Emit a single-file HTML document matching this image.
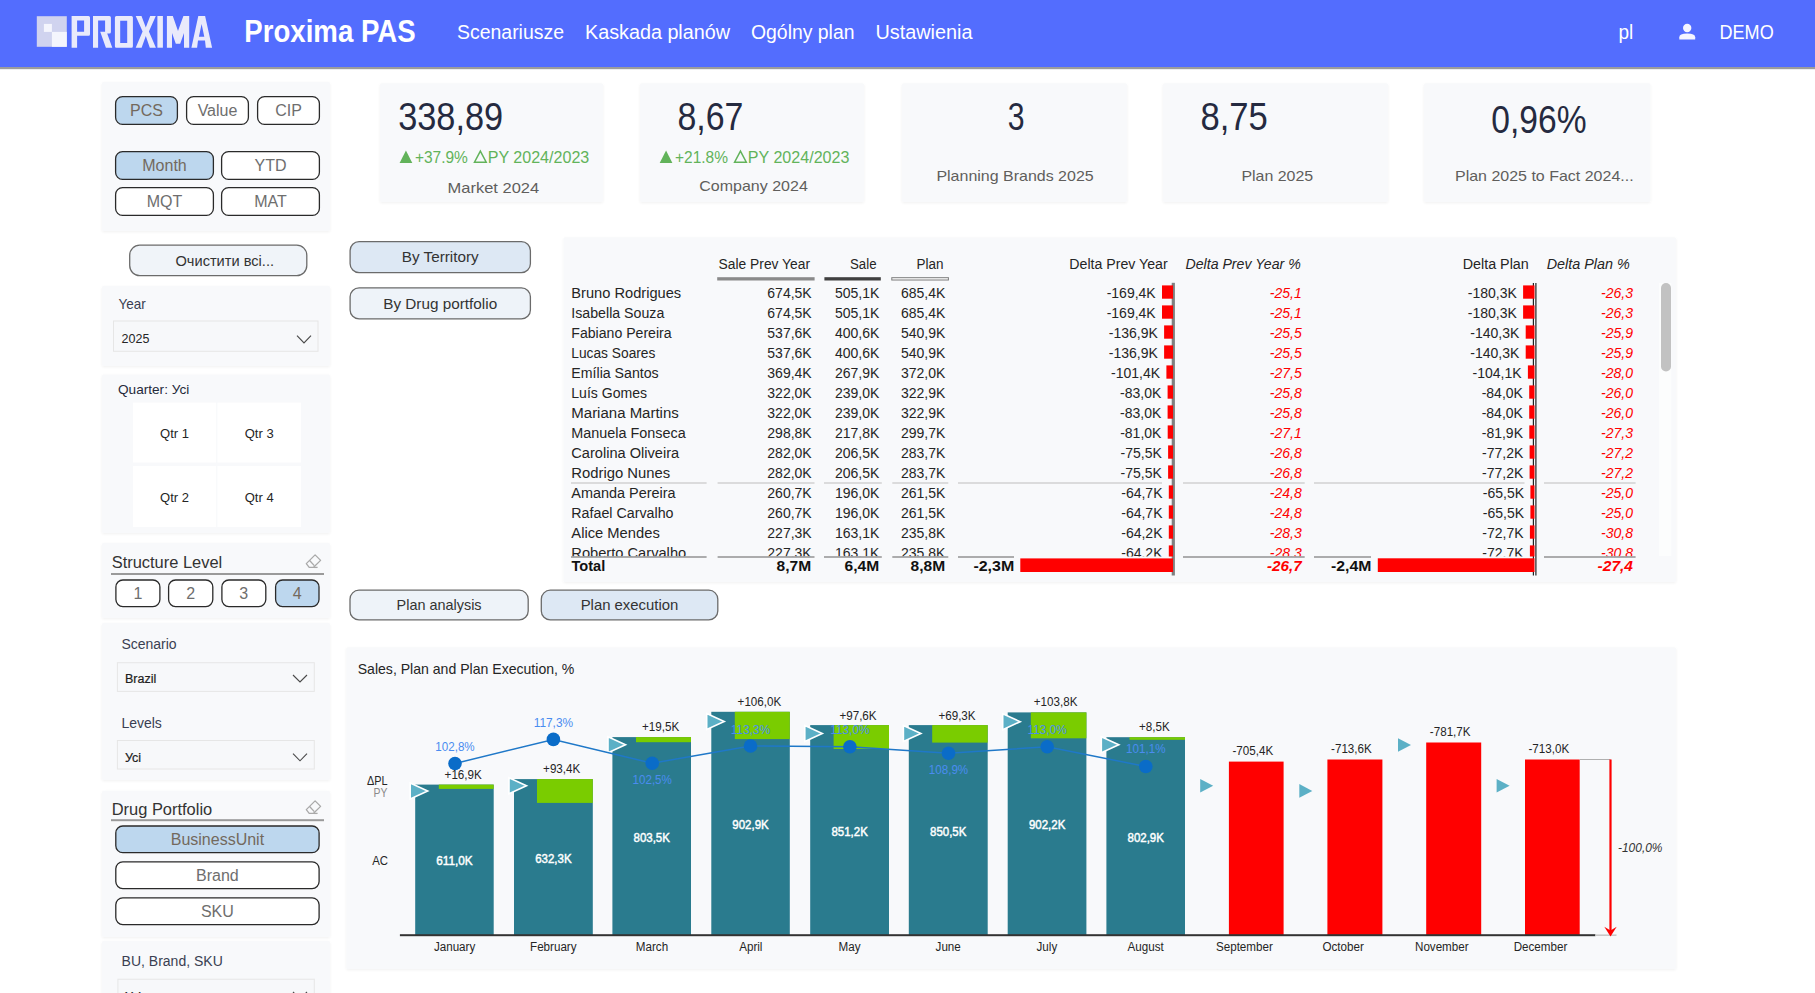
<!DOCTYPE html>
<html><head><meta charset="utf-8"><title>Proxima PAS</title>
<style>
html,body{margin:0;padding:0;background:#ffffff;overflow:hidden;}
svg{display:block;font-family:"Liberation Sans",sans-serif;}
</style></head><body>
<svg width="1815" height="993" viewBox="0 0 1815 993">
<defs><filter id="sh" x="-5%" y="-5%" width="110%" height="110%"><feGaussianBlur in="SourceAlpha" stdDeviation="1.5"/><feOffset dx="0" dy="0.5"/><feComponentTransfer><feFuncA type="linear" slope="0.06"/></feComponentTransfer><feMerge><feMergeNode/><feMergeNode in="SourceGraphic"/></feMerge></filter></defs>
<rect x="0" y="0" width="1815" height="67" fill="#536dfe"/>
<rect x="0" y="67" width="1815" height="2" fill="#9c9c9c"/>
<rect x="0" y="69" width="1815" height="1" fill="#ececee"/>
<rect x="36.8" y="16.2" width="30.0" height="30.6" fill="#d0d3ef"/>
<rect x="43.9" y="23.9" width="8.0" height="8.0" fill="#f4f5fd"/>
<rect x="51.9" y="31.9" width="14.9" height="14.9" fill="#f4f5fd"/>
<path fill="#e9eafb" fill-rule="evenodd" d="M71.6 47.7 V16 H88.5 Q90 16 90 17.5 V34.3 Q90 35.8 88.5 35.8 H77.1 V47.7 Z M77.1 20.5 V31.7 H84.1 V20.5 Z"/>
<path fill="#e9eafb" fill-rule="evenodd" d="M93 47.7 V16 H109.4 Q110.9 16 110.9 17.5 V31.9 Q110.9 33.4 109.4 33.4 H107.2 L112.3 47.7 H105.9 L100.2 31.7 H105.1 V20.5 H98.1 V47.7 Z"/>
<path fill="#e9eafb" fill-rule="evenodd" d="M116.4 16 H131.4 Q132.9 16 132.9 17.5 V46.2 Q132.9 47.7 131.4 47.7 H116.4 Q114.9 47.7 114.9 46.2 V17.5 Q114.9 16 116.4 16 Z M120.2 20.7 V43 H127.2 V20.7 Z"/>
<path fill="#e9eafb" d="M135.7 16 H141.5 L145.8 27.5 L150.2 16 H155.8 L148.9 31.4 L155.9 47.7 H149.8 L145.8 36 L141.6 47.7 H135.7 L142.6 31.4 Z"/>
<rect x="157.4" y="16" width="5.5" height="31.7" fill="#e9eafb"/>
<path fill="#e9eafb" d="M166.9 47.7 V16 H172.8 L178 31 L183.4 16 H189.2 V47.7 H184 V33 L180.2 43.8 H175.8 L172 33 V47.7 Z"/>
<path fill="#e9eafb" fill-rule="evenodd" d="M191.4 47.7 L198.3 16 H205.1 L212.1 47.7 H205.8 L205 40.5 H198 L197.1 47.7 Z M198.9 36.8 H204.3 L201.6 24 Z"/>
<text x="244.3" y="42" font-size="30.5" fill="#ffffff" font-weight="bold" textLength="171.4" lengthAdjust="spacingAndGlyphs">Proxima PAS</text>
<text x="457" y="39" font-size="20" fill="#ffffff" textLength="107" lengthAdjust="spacingAndGlyphs">Scenariusze</text>
<text x="585" y="39" font-size="20" fill="#ffffff" textLength="145" lengthAdjust="spacingAndGlyphs">Kaskada planów</text>
<text x="751" y="39" font-size="20" fill="#ffffff" textLength="103.5" lengthAdjust="spacingAndGlyphs">Ogólny plan</text>
<text x="875.4" y="39" font-size="20" fill="#ffffff" textLength="97.2" lengthAdjust="spacingAndGlyphs">Ustawienia</text>
<text x="1618.5" y="39.3" font-size="20" fill="#ffffff" textLength="14.8" lengthAdjust="spacingAndGlyphs">pl</text>
<text x="1719.5" y="39.3" font-size="20" fill="#ffffff" textLength="54.2" lengthAdjust="spacingAndGlyphs">DEMO</text>
<circle cx="1687.2" cy="28" r="4.2" fill="#f4f5ff"/>
<path fill="#f4f5ff" d="M1679.3 39.6 V37.2 Q1679.3 33.6 1687.2 33.6 Q1695.2 33.6 1695.2 37.2 V39.6 Z"/>
<rect x="102" y="82" width="228" height="149" fill="#f8f9fb" rx="1.5" filter="url(#sh)"/>
<rect x="115.6" y="96.6" width="61.8" height="27.8" fill="#bdd7ee" rx="7" stroke="#2a2a2a" stroke-width="1.3"/>
<text x="146.5" y="116.0" font-size="16" fill="#73695d" text-anchor="middle">PCS</text>
<rect x="186.6" y="96.6" width="61.8" height="27.8" fill="#ffffff" rx="7" stroke="#2a2a2a" stroke-width="1.3"/>
<text x="217.5" y="116.0" font-size="16" fill="#6e6e6e" text-anchor="middle">Value</text>
<rect x="257.6" y="96.6" width="61.8" height="27.8" fill="#ffffff" rx="7" stroke="#2a2a2a" stroke-width="1.3"/>
<text x="288.5" y="116.0" font-size="16" fill="#6e6e6e" text-anchor="middle">CIP</text>
<rect x="115.6" y="151.6" width="97.8" height="27.8" fill="#bdd7ee" rx="7" stroke="#2a2a2a" stroke-width="1.3"/>
<text x="164.5" y="171.0" font-size="16" fill="#73695d" text-anchor="middle">Month</text>
<rect x="221.6" y="151.6" width="97.8" height="27.8" fill="#ffffff" rx="7" stroke="#2a2a2a" stroke-width="1.3"/>
<text x="270.5" y="171.0" font-size="16" fill="#6e6e6e" text-anchor="middle">YTD</text>
<rect x="115.6" y="187.6" width="97.8" height="27.8" fill="#ffffff" rx="7" stroke="#2a2a2a" stroke-width="1.3"/>
<text x="164.5" y="207.0" font-size="16" fill="#6e6e6e" text-anchor="middle">MQT</text>
<rect x="221.6" y="187.6" width="97.8" height="27.8" fill="#ffffff" rx="7" stroke="#2a2a2a" stroke-width="1.3"/>
<text x="270.5" y="207.0" font-size="16" fill="#6e6e6e" text-anchor="middle">MAT</text>
<rect x="129.7" y="245.2" width="177.1" height="30.4" fill="#f0f4f9" rx="10" stroke="#6b6b6b" stroke-width="1.3"/>
<text x="175.5" y="265.6" font-size="15" fill="#333333" textLength="98.5" lengthAdjust="spacingAndGlyphs">Очистити всі...</text>
<rect x="102" y="286" width="228" height="80" fill="#f8f9fb" rx="1.5" filter="url(#sh)"/>
<text x="118.4" y="309" font-size="15" fill="#3a3f52" textLength="27.3" lengthAdjust="spacingAndGlyphs">Year</text>
<rect x="113.5" y="321" width="204.5" height="30.3" fill="#f7f8fa" stroke="#e6e6e6" stroke-width="1"/>
<text x="121.6" y="342.6" font-size="12.5" fill="#252525">2025</text>
<polyline points="297,335.7 304.0,343 311,335.7" fill="none" stroke="#4a4a4a" stroke-width="1.15"/>
<rect x="102" y="374.5" width="228" height="158.5" fill="#f8f9fb" rx="1.5" filter="url(#sh)"/>
<text x="118" y="393.8" font-size="13" fill="#252a3a" textLength="71.3" lengthAdjust="spacingAndGlyphs">Quarter: Усі</text>
<rect x="133" y="402.6" width="83.2" height="59.9" fill="#ffffff"/>
<rect x="133" y="466" width="83.2" height="61" fill="#ffffff"/>
<rect x="217.4" y="402.6" width="83.6" height="59.9" fill="#ffffff"/>
<rect x="217.4" y="466" width="83.6" height="61" fill="#ffffff"/>
<text x="174.5" y="437.8" font-size="13" fill="#252525" text-anchor="middle">Qtr 1</text>
<text x="259.2" y="437.8" font-size="13" fill="#252525" text-anchor="middle">Qtr 3</text>
<text x="174.5" y="501.8" font-size="13" fill="#252525" text-anchor="middle">Qtr 2</text>
<text x="259.2" y="501.8" font-size="13" fill="#252525" text-anchor="middle">Qtr 4</text>
<rect x="102" y="543" width="228" height="75" fill="#f8f9fb" rx="1.5" filter="url(#sh)"/>
<text x="111.7" y="567.6" font-size="16" fill="#333333" textLength="110.5" lengthAdjust="spacingAndGlyphs">Structure Level</text>
<rect x="111" y="573" width="213" height="2" fill="#9a9a9a"/>
<g transform="translate(0.0,0.0)" fill="none" stroke="#a9a9a9" stroke-width="1.3" stroke-linejoin="round"><path d="M315.1 554.9 L320.6 560.4 L313.6 567.3 H309.2 L306.3 563.6 Z"/><path d="M309.6 560.5 L314.3 565.6"/><path d="M313.6 567.4 H317.6"/></g>
<rect x="115.89999999999999" y="580.0" width="44.0" height="26.6" fill="#ffffff" rx="7" stroke="#2a2a2a" stroke-width="1.3"/>
<text x="137.9" y="598.8" font-size="16" fill="#6e6e6e" text-anchor="middle">1</text>
<rect x="168.6" y="580.0" width="44.2" height="26.6" fill="#ffffff" rx="7" stroke="#2a2a2a" stroke-width="1.3"/>
<text x="190.7" y="598.8" font-size="16" fill="#6e6e6e" text-anchor="middle">2</text>
<rect x="221.9" y="580.0" width="43.9" height="26.6" fill="#ffffff" rx="7" stroke="#2a2a2a" stroke-width="1.3"/>
<text x="243.8" y="598.8" font-size="16" fill="#6e6e6e" text-anchor="middle">3</text>
<rect x="275.6" y="580.0" width="43.4" height="26.6" fill="#bdd7ee" rx="7" stroke="#2a2a2a" stroke-width="1.3"/>
<text x="297.3" y="598.8" font-size="16" fill="#73695d" text-anchor="middle">4</text>
<rect x="102" y="623" width="228" height="157" fill="#f8f9fb" rx="1.5" filter="url(#sh)"/>
<text x="121.4" y="648.6" font-size="14" fill="#3a3f52">Scenario</text>
<rect x="117.4" y="662.7" width="196.9" height="28.7" fill="#f7f8fa" stroke="#e6e6e6" stroke-width="1"/>
<text x="125" y="683" font-size="12.5" fill="#202020" stroke="#202020" stroke-width="0.2">Brazil</text>
<polyline points="293,675 300.0,682 307,675" fill="none" stroke="#4a4a4a" stroke-width="1.15"/>
<text x="121.4" y="728" font-size="14" fill="#3a3f52">Levels</text>
<rect x="117.4" y="740.5" width="196.9" height="28.5" fill="#f7f8fa" stroke="#e6e6e6" stroke-width="1"/>
<text x="125" y="761.7" font-size="12.5" fill="#202020" stroke="#202020" stroke-width="0.2">Усі</text>
<polyline points="293,753.7 300.0,760.8 307,753.7" fill="none" stroke="#4a4a4a" stroke-width="1.15"/>
<rect x="102" y="790.7" width="228" height="146.3" fill="#f8f9fb" rx="1.5" filter="url(#sh)"/>
<text x="111.7" y="814.5" font-size="16" fill="#333333" textLength="100.5" lengthAdjust="spacingAndGlyphs">Drug Portfolio</text>
<rect x="111" y="819.2" width="213" height="2.0" fill="#9a9a9a"/>
<g transform="translate(0.0,246.0)" fill="none" stroke="#a9a9a9" stroke-width="1.3" stroke-linejoin="round"><path d="M315.1 554.9 L320.6 560.4 L313.6 567.3 H309.2 L306.3 563.6 Z"/><path d="M309.6 560.5 L314.3 565.6"/><path d="M313.6 567.4 H317.6"/></g>
<rect x="115.8" y="826.0" width="203.3" height="26.7" fill="#bdd7ee" rx="7" stroke="#2a2a2a" stroke-width="1.3"/>
<text x="217.4" y="844.9" font-size="16" fill="#73695d" text-anchor="middle">BusinessUnit</text>
<rect x="115.8" y="861.8000000000001" width="203.3" height="26.8" fill="#ffffff" rx="7" stroke="#2a2a2a" stroke-width="1.3"/>
<text x="217.4" y="880.7" font-size="16" fill="#6e6e6e" text-anchor="middle">Brand</text>
<rect x="115.8" y="897.8000000000001" width="203.3" height="26.8" fill="#ffffff" rx="7" stroke="#2a2a2a" stroke-width="1.3"/>
<text x="217.4" y="916.7" font-size="16" fill="#6e6e6e" text-anchor="middle">SKU</text>
<rect x="102" y="941" width="228" height="59" fill="#f8f9fb" rx="1.5" filter="url(#sh)"/>
<text x="121.6" y="966" font-size="14" fill="#3a3f52">BU, Brand, SKU</text>
<rect x="117.9" y="979.2" width="196.4" height="30.8" fill="#f7f8fa" stroke="#e6e6e6" stroke-width="1"/>
<text x="125" y="1000.5" font-size="12.5" fill="#202020" stroke="#202020" stroke-width="0.2">Усі</text>
<polyline points="293,992 300.0,999 307,992" fill="none" stroke="#4a4a4a" stroke-width="1.15"/>
<rect x="380" y="83.3" width="223" height="118.7" fill="#f8f9fb" rx="1.5" filter="url(#sh)"/>
<rect x="640" y="83.3" width="224" height="118.7" fill="#f8f9fb" rx="1.5" filter="url(#sh)"/>
<rect x="902" y="83.3" width="225" height="118.7" fill="#f8f9fb" rx="1.5" filter="url(#sh)"/>
<rect x="1163" y="83.3" width="225" height="118.7" fill="#f8f9fb" rx="1.5" filter="url(#sh)"/>
<rect x="1424" y="83.3" width="226.4" height="118.7" fill="#f8f9fb" rx="1.5" filter="url(#sh)"/>
<text x="398.2" y="130" font-size="38" fill="#252a40" textLength="105" lengthAdjust="spacingAndGlyphs">338,89</text>
<polygon points="399.6,162.89999999999998 412.3,162.89999999999998 405.95000000000005,150.5" fill="#62b35a"/>
<text x="414.9" y="162.7" font-size="16" fill="#62b35a" textLength="53" lengthAdjust="spacingAndGlyphs">+37.9%</text>
<polygon points="474.50000000000006,162.2 486.20000000000005,162.2 480.35,151.2" fill="none" stroke="#62b35a" stroke-width="1.5"/>
<text x="487.7" y="162.7" font-size="16" fill="#62b35a" textLength="101.6" lengthAdjust="spacingAndGlyphs">PY 2024/2023</text>
<text x="447.6" y="192.7" font-size="15" fill="#605e5c" textLength="91.6" lengthAdjust="spacingAndGlyphs">Market 2024</text>
<text x="677.4" y="129.5" font-size="38" fill="#252a40" textLength="66" lengthAdjust="spacingAndGlyphs">8,67</text>
<polygon points="659.7,162.89999999999998 672.4000000000001,162.89999999999998 666.0500000000001,150.5" fill="#62b35a"/>
<text x="675.0" y="162.7" font-size="16" fill="#62b35a" textLength="53" lengthAdjust="spacingAndGlyphs">+21.8%</text>
<polygon points="734.6,162.2 746.3000000000001,162.2 740.45,151.2" fill="none" stroke="#62b35a" stroke-width="1.5"/>
<text x="747.8" y="162.7" font-size="16" fill="#62b35a" textLength="101.6" lengthAdjust="spacingAndGlyphs">PY 2024/2023</text>
<text x="699.2" y="191" font-size="15" fill="#605e5c" textLength="108.6" lengthAdjust="spacingAndGlyphs">Company 2024</text>
<text x="1007.8" y="130.4" font-size="38" fill="#252a40" textLength="16.8" lengthAdjust="spacingAndGlyphs">3</text>
<text x="936.4" y="181" font-size="15" fill="#605e5c" textLength="157.3" lengthAdjust="spacingAndGlyphs">Planning Brands 2025</text>
<text x="1200.4" y="130" font-size="38" fill="#252a40" textLength="67.4" lengthAdjust="spacingAndGlyphs">8,75</text>
<text x="1241.4" y="181" font-size="15" fill="#605e5c" textLength="71.8" lengthAdjust="spacingAndGlyphs">Plan 2025</text>
<text x="1491.3" y="132.6" font-size="38" fill="#252a40" textLength="95.2" lengthAdjust="spacingAndGlyphs">0,96%</text>
<text x="1455" y="181" font-size="15" fill="#605e5c" textLength="178.6" lengthAdjust="spacingAndGlyphs">Plan 2025 to Fact 2024...</text>
<rect x="350.1" y="241.6" width="180.3" height="31.1" fill="#dde8f4" rx="9" stroke="#6b6b6b" stroke-width="1.3"/>
<text x="440.2" y="262.4" font-size="15" fill="#333333" text-anchor="middle" textLength="77" lengthAdjust="spacingAndGlyphs">By Territory</text>
<rect x="350.1" y="287.8" width="180.3" height="31.1" fill="#eef3f9" rx="9" stroke="#6b6b6b" stroke-width="1.3"/>
<text x="440.2" y="308.7" font-size="15" fill="#333333" text-anchor="middle" textLength="114" lengthAdjust="spacingAndGlyphs">By Drug portfolio</text>
<rect x="350.0" y="590.2" width="178.2" height="29.7" fill="#eef3f9" rx="9" stroke="#6b6b6b" stroke-width="1.3"/>
<text x="439.1" y="610.3" font-size="15" fill="#333333" text-anchor="middle" textLength="85" lengthAdjust="spacingAndGlyphs">Plan analysis</text>
<rect x="541.3000000000001" y="590.2" width="176.5" height="29.7" fill="#dde8f4" rx="9" stroke="#6b6b6b" stroke-width="1.3"/>
<text x="629.5" y="610.3" font-size="15" fill="#333333" text-anchor="middle" textLength="97.7" lengthAdjust="spacingAndGlyphs">Plan execution</text>
<rect x="563.5" y="237.3" width="1112.5" height="344.7" fill="#f8f9fb" rx="1.5" filter="url(#sh)"/>
<text x="810" y="268.7" font-size="14" fill="#252525" text-anchor="end" textLength="91.4" lengthAdjust="spacingAndGlyphs">Sale Prev Year</text>
<text x="876.5" y="268.7" font-size="14" fill="#252525" text-anchor="end" textLength="26.5" lengthAdjust="spacingAndGlyphs">Sale</text>
<text x="943.6" y="268.7" font-size="14" fill="#252525" text-anchor="end" textLength="27" lengthAdjust="spacingAndGlyphs">Plan</text>
<text x="1167.7" y="268.7" font-size="14" fill="#252525" text-anchor="end" textLength="98.4" lengthAdjust="spacingAndGlyphs">Delta Prev Year</text>
<text x="1300.7" y="268.7" font-size="14" fill="#252525" text-anchor="end" font-style="italic" textLength="115.2" lengthAdjust="spacingAndGlyphs">Delta Prev Year %</text>
<text x="1528.8" y="268.7" font-size="14" fill="#252525" text-anchor="end" textLength="66.1" lengthAdjust="spacingAndGlyphs">Delta Plan</text>
<text x="1629.8" y="268.7" font-size="14" fill="#252525" text-anchor="end" font-style="italic" textLength="83.1" lengthAdjust="spacingAndGlyphs">Delta Plan %</text>
<rect x="717.2" y="277.2" width="97.4" height="3.3" fill="#8a8a8a"/>
<rect x="824.4" y="277.2" width="56.4" height="3.3" fill="#404040"/>
<rect x="891.8" y="277.7" width="56.6" height="2.3" fill="#ffffff" stroke="#7a7a7a" stroke-width="1"/>
<rect x="1171.7" y="282.8" width="3.2" height="292.7" fill="#808080"/>
<rect x="1532.8" y="283" width="1.2" height="292.5" fill="#222222"/>
<rect x="1535.3" y="283" width="1.2" height="292.5" fill="#222222"/>
<clipPath id="rows"><rect x="560" y="282" width="1110" height="274.5"/></clipPath>
<g clip-path="url(#rows)">
<text x="571.3" y="298" font-size="14" fill="#252525" textLength="109.9" lengthAdjust="spacingAndGlyphs">Bruno Rodrigues</text>
<text x="811.7" y="298" font-size="14" fill="#252525" text-anchor="end">674,5K</text>
<text x="879.4" y="298" font-size="14" fill="#252525" text-anchor="end">505,1K</text>
<text x="945.3" y="298" font-size="14" fill="#252525" text-anchor="end">685,4K</text>
<rect x="1162.0" y="285.4" width="11.0" height="13.3" fill="#ff0000"/>
<text x="1155.7" y="298" font-size="14" fill="#252525" text-anchor="end">-169,4K</text>
<text x="1301.7" y="298" font-size="14" fill="#ff0000" text-anchor="end" font-style="italic">-25,1</text>
<rect x="1523.1" y="285.4" width="11.4" height="13.3" fill="#ff0000"/>
<text x="1516.8" y="298" font-size="14" fill="#252525" text-anchor="end">-180,3K</text>
<text x="1633" y="298" font-size="14" fill="#ff0000" text-anchor="end" font-style="italic">-26,3</text>
<text x="571.3" y="318" font-size="14" fill="#252525" textLength="93.0" lengthAdjust="spacingAndGlyphs">Isabella Souza</text>
<text x="811.7" y="318" font-size="14" fill="#252525" text-anchor="end">674,5K</text>
<text x="879.4" y="318" font-size="14" fill="#252525" text-anchor="end">505,1K</text>
<text x="945.3" y="318" font-size="14" fill="#252525" text-anchor="end">685,4K</text>
<rect x="1162.0" y="305.4" width="11.0" height="13.3" fill="#ff0000"/>
<text x="1155.7" y="318" font-size="14" fill="#252525" text-anchor="end">-169,4K</text>
<text x="1301.7" y="318" font-size="14" fill="#ff0000" text-anchor="end" font-style="italic">-25,1</text>
<rect x="1523.1" y="305.4" width="11.4" height="13.3" fill="#ff0000"/>
<text x="1516.8" y="318" font-size="14" fill="#252525" text-anchor="end">-180,3K</text>
<text x="1633" y="318" font-size="14" fill="#ff0000" text-anchor="end" font-style="italic">-26,3</text>
<text x="571.3" y="338" font-size="14" fill="#252525" textLength="100.3" lengthAdjust="spacingAndGlyphs">Fabiano Pereira</text>
<text x="811.7" y="338" font-size="14" fill="#252525" text-anchor="end">537,6K</text>
<text x="879.4" y="338" font-size="14" fill="#252525" text-anchor="end">400,6K</text>
<text x="945.3" y="338" font-size="14" fill="#252525" text-anchor="end">540,9K</text>
<rect x="1164.1" y="325.4" width="8.9" height="13.3" fill="#ff0000"/>
<text x="1157.8" y="338" font-size="14" fill="#252525" text-anchor="end">-136,9K</text>
<text x="1301.7" y="338" font-size="14" fill="#ff0000" text-anchor="end" font-style="italic">-25,5</text>
<rect x="1525.7" y="325.4" width="8.8" height="13.3" fill="#ff0000"/>
<text x="1519.4" y="338" font-size="14" fill="#252525" text-anchor="end">-140,3K</text>
<text x="1633" y="338" font-size="14" fill="#ff0000" text-anchor="end" font-style="italic">-25,9</text>
<text x="571.3" y="358" font-size="14" fill="#252525" textLength="84.1" lengthAdjust="spacingAndGlyphs">Lucas Soares</text>
<text x="811.7" y="358" font-size="14" fill="#252525" text-anchor="end">537,6K</text>
<text x="879.4" y="358" font-size="14" fill="#252525" text-anchor="end">400,6K</text>
<text x="945.3" y="358" font-size="14" fill="#252525" text-anchor="end">540,9K</text>
<rect x="1164.1" y="345.4" width="8.9" height="13.3" fill="#ff0000"/>
<text x="1157.8" y="358" font-size="14" fill="#252525" text-anchor="end">-136,9K</text>
<text x="1301.7" y="358" font-size="14" fill="#ff0000" text-anchor="end" font-style="italic">-25,5</text>
<rect x="1525.7" y="345.4" width="8.8" height="13.3" fill="#ff0000"/>
<text x="1519.4" y="358" font-size="14" fill="#252525" text-anchor="end">-140,3K</text>
<text x="1633" y="358" font-size="14" fill="#ff0000" text-anchor="end" font-style="italic">-25,9</text>
<text x="571.3" y="378" font-size="14" fill="#252525" textLength="87.4" lengthAdjust="spacingAndGlyphs">Emília Santos</text>
<text x="811.7" y="378" font-size="14" fill="#252525" text-anchor="end">369,4K</text>
<text x="879.4" y="378" font-size="14" fill="#252525" text-anchor="end">267,9K</text>
<text x="945.3" y="378" font-size="14" fill="#252525" text-anchor="end">372,0K</text>
<rect x="1166.4" y="365.4" width="6.6" height="13.3" fill="#ff0000"/>
<text x="1160.1" y="378" font-size="14" fill="#252525" text-anchor="end">-101,4K</text>
<text x="1301.7" y="378" font-size="14" fill="#ff0000" text-anchor="end" font-style="italic">-27,5</text>
<rect x="1527.9" y="365.4" width="6.6" height="13.3" fill="#ff0000"/>
<text x="1521.6" y="378" font-size="14" fill="#252525" text-anchor="end">-104,1K</text>
<text x="1633" y="378" font-size="14" fill="#ff0000" text-anchor="end" font-style="italic">-28,0</text>
<text x="571.3" y="398" font-size="14" fill="#252525" textLength="75.8" lengthAdjust="spacingAndGlyphs">Luís Gomes</text>
<text x="811.7" y="398" font-size="14" fill="#252525" text-anchor="end">322,0K</text>
<text x="879.4" y="398" font-size="14" fill="#252525" text-anchor="end">239,0K</text>
<text x="945.3" y="398" font-size="14" fill="#252525" text-anchor="end">322,9K</text>
<rect x="1167.6" y="385.4" width="5.4" height="13.3" fill="#ff0000"/>
<text x="1161.3" y="398" font-size="14" fill="#252525" text-anchor="end">-83,0K</text>
<text x="1301.7" y="398" font-size="14" fill="#ff0000" text-anchor="end" font-style="italic">-25,8</text>
<rect x="1529.2" y="385.4" width="5.3" height="13.3" fill="#ff0000"/>
<text x="1522.9" y="398" font-size="14" fill="#252525" text-anchor="end">-84,0K</text>
<text x="1633" y="398" font-size="14" fill="#ff0000" text-anchor="end" font-style="italic">-26,0</text>
<text x="571.3" y="418" font-size="14" fill="#252525" textLength="107.5" lengthAdjust="spacingAndGlyphs">Mariana Martins</text>
<text x="811.7" y="418" font-size="14" fill="#252525" text-anchor="end">322,0K</text>
<text x="879.4" y="418" font-size="14" fill="#252525" text-anchor="end">239,0K</text>
<text x="945.3" y="418" font-size="14" fill="#252525" text-anchor="end">322,9K</text>
<rect x="1167.6" y="405.4" width="5.4" height="13.3" fill="#ff0000"/>
<text x="1161.3" y="418" font-size="14" fill="#252525" text-anchor="end">-83,0K</text>
<text x="1301.7" y="418" font-size="14" fill="#ff0000" text-anchor="end" font-style="italic">-25,8</text>
<rect x="1529.2" y="405.4" width="5.3" height="13.3" fill="#ff0000"/>
<text x="1522.9" y="418" font-size="14" fill="#252525" text-anchor="end">-84,0K</text>
<text x="1633" y="418" font-size="14" fill="#ff0000" text-anchor="end" font-style="italic">-26,0</text>
<text x="571.3" y="438" font-size="14" fill="#252525" textLength="114.4" lengthAdjust="spacingAndGlyphs">Manuela Fonseca</text>
<text x="811.7" y="438" font-size="14" fill="#252525" text-anchor="end">298,8K</text>
<text x="879.4" y="438" font-size="14" fill="#252525" text-anchor="end">217,8K</text>
<text x="945.3" y="438" font-size="14" fill="#252525" text-anchor="end">299,7K</text>
<rect x="1167.7" y="425.4" width="5.3" height="13.3" fill="#ff0000"/>
<text x="1161.4" y="438" font-size="14" fill="#252525" text-anchor="end">-81,0K</text>
<text x="1301.7" y="438" font-size="14" fill="#ff0000" text-anchor="end" font-style="italic">-27,1</text>
<rect x="1529.3" y="425.4" width="5.2" height="13.3" fill="#ff0000"/>
<text x="1523.0" y="438" font-size="14" fill="#252525" text-anchor="end">-81,9K</text>
<text x="1633" y="438" font-size="14" fill="#ff0000" text-anchor="end" font-style="italic">-27,3</text>
<text x="571.3" y="458" font-size="14" fill="#252525" textLength="107.8" lengthAdjust="spacingAndGlyphs">Carolina Oliveira</text>
<text x="811.7" y="458" font-size="14" fill="#252525" text-anchor="end">282,0K</text>
<text x="879.4" y="458" font-size="14" fill="#252525" text-anchor="end">206,5K</text>
<text x="945.3" y="458" font-size="14" fill="#252525" text-anchor="end">283,7K</text>
<rect x="1168.1" y="445.4" width="4.9" height="13.3" fill="#ff0000"/>
<text x="1161.8" y="458" font-size="14" fill="#252525" text-anchor="end">-75,5K</text>
<text x="1301.7" y="458" font-size="14" fill="#ff0000" text-anchor="end" font-style="italic">-26,8</text>
<rect x="1529.6" y="445.4" width="4.9" height="13.3" fill="#ff0000"/>
<text x="1523.3" y="458" font-size="14" fill="#252525" text-anchor="end">-77,2K</text>
<text x="1633" y="458" font-size="14" fill="#ff0000" text-anchor="end" font-style="italic">-27,2</text>
<text x="571.3" y="478" font-size="14" fill="#252525" textLength="98.9" lengthAdjust="spacingAndGlyphs">Rodrigo Nunes</text>
<text x="811.7" y="478" font-size="14" fill="#252525" text-anchor="end">282,0K</text>
<text x="879.4" y="478" font-size="14" fill="#252525" text-anchor="end">206,5K</text>
<text x="945.3" y="478" font-size="14" fill="#252525" text-anchor="end">283,7K</text>
<rect x="1168.1" y="465.4" width="4.9" height="13.3" fill="#ff0000"/>
<text x="1161.8" y="478" font-size="14" fill="#252525" text-anchor="end">-75,5K</text>
<text x="1301.7" y="478" font-size="14" fill="#ff0000" text-anchor="end" font-style="italic">-26,8</text>
<rect x="1529.6" y="465.4" width="4.9" height="13.3" fill="#ff0000"/>
<text x="1523.3" y="478" font-size="14" fill="#252525" text-anchor="end">-77,2K</text>
<text x="1633" y="478" font-size="14" fill="#ff0000" text-anchor="end" font-style="italic">-27,2</text>
<text x="571.3" y="498" font-size="14" fill="#252525" textLength="104.3" lengthAdjust="spacingAndGlyphs">Amanda Pereira</text>
<text x="811.7" y="498" font-size="14" fill="#252525" text-anchor="end">260,7K</text>
<text x="879.4" y="498" font-size="14" fill="#252525" text-anchor="end">196,0K</text>
<text x="945.3" y="498" font-size="14" fill="#252525" text-anchor="end">261,5K</text>
<rect x="1168.8" y="485.4" width="4.2" height="13.3" fill="#ff0000"/>
<text x="1162.5" y="498" font-size="14" fill="#252525" text-anchor="end">-64,7K</text>
<text x="1301.7" y="498" font-size="14" fill="#ff0000" text-anchor="end" font-style="italic">-24,8</text>
<rect x="1530.4" y="485.4" width="4.1" height="13.3" fill="#ff0000"/>
<text x="1524.1" y="498" font-size="14" fill="#252525" text-anchor="end">-65,5K</text>
<text x="1633" y="498" font-size="14" fill="#ff0000" text-anchor="end" font-style="italic">-25,0</text>
<text x="571.3" y="518" font-size="14" fill="#252525" textLength="102.2" lengthAdjust="spacingAndGlyphs">Rafael Carvalho</text>
<text x="811.7" y="518" font-size="14" fill="#252525" text-anchor="end">260,7K</text>
<text x="879.4" y="518" font-size="14" fill="#252525" text-anchor="end">196,0K</text>
<text x="945.3" y="518" font-size="14" fill="#252525" text-anchor="end">261,5K</text>
<rect x="1168.8" y="505.4" width="4.2" height="13.3" fill="#ff0000"/>
<text x="1162.5" y="518" font-size="14" fill="#252525" text-anchor="end">-64,7K</text>
<text x="1301.7" y="518" font-size="14" fill="#ff0000" text-anchor="end" font-style="italic">-24,8</text>
<rect x="1530.4" y="505.4" width="4.1" height="13.3" fill="#ff0000"/>
<text x="1524.1" y="518" font-size="14" fill="#252525" text-anchor="end">-65,5K</text>
<text x="1633" y="518" font-size="14" fill="#ff0000" text-anchor="end" font-style="italic">-25,0</text>
<text x="571.3" y="538" font-size="14" fill="#252525" textLength="88.5" lengthAdjust="spacingAndGlyphs">Alice Mendes</text>
<text x="811.7" y="538" font-size="14" fill="#252525" text-anchor="end">227,3K</text>
<text x="879.4" y="538" font-size="14" fill="#252525" text-anchor="end">163,1K</text>
<text x="945.3" y="538" font-size="14" fill="#252525" text-anchor="end">235,8K</text>
<rect x="1168.8" y="525.4" width="4.2" height="13.3" fill="#ff0000"/>
<text x="1162.5" y="538" font-size="14" fill="#252525" text-anchor="end">-64,2K</text>
<text x="1301.7" y="538" font-size="14" fill="#ff0000" text-anchor="end" font-style="italic">-28,3</text>
<rect x="1529.9" y="525.4" width="4.6" height="13.3" fill="#ff0000"/>
<text x="1523.6" y="538" font-size="14" fill="#252525" text-anchor="end">-72,7K</text>
<text x="1633" y="538" font-size="14" fill="#ff0000" text-anchor="end" font-style="italic">-30,8</text>
<text x="571.3" y="558" font-size="14" fill="#252525" textLength="114.9" lengthAdjust="spacingAndGlyphs">Roberto Carvalho</text>
<text x="811.7" y="558" font-size="14" fill="#252525" text-anchor="end">227,3K</text>
<text x="879.4" y="558" font-size="14" fill="#252525" text-anchor="end">163,1K</text>
<text x="945.3" y="558" font-size="14" fill="#252525" text-anchor="end">235,8K</text>
<rect x="1168.8" y="545.4" width="4.2" height="13.3" fill="#ff0000"/>
<text x="1162.5" y="558" font-size="14" fill="#252525" text-anchor="end">-64,2K</text>
<text x="1301.7" y="558" font-size="14" fill="#ff0000" text-anchor="end" font-style="italic">-28,3</text>
<rect x="1529.9" y="545.4" width="4.6" height="13.3" fill="#ff0000"/>
<text x="1523.6" y="558" font-size="14" fill="#252525" text-anchor="end">-72,7K</text>
<text x="1633" y="558" font-size="14" fill="#ff0000" text-anchor="end" font-style="italic">-30,8</text>
</g>
<rect x="571" y="482.2" width="135.6" height="1.6" fill="#d4d4d4"/>
<rect x="717.6" y="482.2" width="96.9" height="1.6" fill="#d4d4d4"/>
<rect x="824" y="482.2" width="57.8" height="1.6" fill="#d4d4d4"/>
<rect x="892.3" y="482.2" width="56.0" height="1.6" fill="#d4d4d4"/>
<rect x="958" y="482.2" width="204" height="1.6" fill="#d4d4d4"/>
<rect x="1183" y="482.2" width="121.7" height="1.6" fill="#d4d4d4"/>
<rect x="1314" y="482.2" width="210.5" height="1.6" fill="#d4d4d4"/>
<rect x="1544" y="482.2" width="91.6" height="1.6" fill="#d4d4d4"/>
<rect x="571" y="556.2" width="135.6" height="1.6" fill="#9a9a9a"/>
<rect x="717.6" y="556.2" width="96.9" height="1.6" fill="#9a9a9a"/>
<rect x="824" y="556.2" width="57.8" height="1.6" fill="#9a9a9a"/>
<rect x="892.3" y="556.2" width="56.0" height="1.6" fill="#9a9a9a"/>
<rect x="958" y="556.2" width="56" height="1.6" fill="#9a9a9a"/>
<rect x="1183" y="556.2" width="121.7" height="1.6" fill="#9a9a9a"/>
<rect x="1314" y="556.2" width="57" height="1.6" fill="#9a9a9a"/>
<rect x="1544" y="556.2" width="91.6" height="1.6" fill="#9a9a9a"/>
<text x="571.4" y="570.8" font-size="15" fill="#111" font-weight="bold" textLength="33.8" lengthAdjust="spacingAndGlyphs">Total</text>
<text x="811.2" y="570.8" font-size="15" fill="#111" text-anchor="end" font-weight="bold" textLength="34.6" lengthAdjust="spacingAndGlyphs">8,7M</text>
<text x="879.2" y="570.8" font-size="15" fill="#111" text-anchor="end" font-weight="bold" textLength="34.6" lengthAdjust="spacingAndGlyphs">6,4M</text>
<text x="945.2" y="570.8" font-size="15" fill="#111" text-anchor="end" font-weight="bold" textLength="34.6" lengthAdjust="spacingAndGlyphs">8,8M</text>
<text x="1014.2" y="570.8" font-size="15" fill="#111" text-anchor="end" font-weight="bold" textLength="40.8" lengthAdjust="spacingAndGlyphs">-2,3M</text>
<rect x="1020.3" y="558.4" width="152.7" height="13.6" fill="#ff0000"/>
<text x="1301.7" y="570.8" font-size="15" fill="#ff0000" text-anchor="end" font-weight="bold" font-style="italic" textLength="34.7" lengthAdjust="spacingAndGlyphs">-26,7</text>
<text x="1371.3" y="570.8" font-size="15" fill="#111" text-anchor="end" font-weight="bold" textLength="40.3" lengthAdjust="spacingAndGlyphs">-2,4M</text>
<rect x="1377.8" y="558.3" width="156.7" height="13.7" fill="#ff0000"/>
<text x="1633" y="570.8" font-size="15" fill="#ff0000" text-anchor="end" font-weight="bold" font-style="italic" textLength="35.4" lengthAdjust="spacingAndGlyphs">-27,4</text>
<rect x="1659" y="283" width="12.4" height="273" fill="#ffffff" opacity="0.6"/>
<rect x="1661" y="283" width="10" height="88.4" fill="#c2c2c2" rx="5"/>
<rect x="346.3" y="647.2" width="1329.7" height="321.8" fill="#f8f9fb" rx="1.5" filter="url(#sh)"/>
<text x="357.7" y="674.3" font-size="14.5" fill="#252525" textLength="216.7" lengthAdjust="spacingAndGlyphs">Sales, Plan and Plan Execution, %</text>
<rect x="415.2" y="784.6" width="78.5" height="150.5" fill="#2a7b8e"/>
<rect x="438.8" y="784.6" width="54.9" height="4.3" fill="#7acc00"/>
<rect x="514.0" y="779.1" width="78.8" height="156.0" fill="#2a7b8e"/>
<rect x="537.0" y="779.1" width="55.8" height="23.8" fill="#7acc00"/>
<rect x="612.4" y="737.1" width="78.6" height="198.0" fill="#2a7b8e"/>
<rect x="636.0" y="737.1" width="55.0" height="5.1" fill="#7acc00"/>
<rect x="711.3" y="711.8" width="78.5" height="223.3" fill="#2a7b8e"/>
<rect x="734.8" y="711.8" width="55.0" height="27.3" fill="#7acc00"/>
<rect x="810.2" y="725.1" width="78.8" height="210.0" fill="#2a7b8e"/>
<rect x="833.6" y="725.1" width="55.4" height="23.9" fill="#7acc00"/>
<rect x="908.8" y="725.1" width="78.9" height="210.0" fill="#2a7b8e"/>
<rect x="932.2" y="725.1" width="55.5" height="17.5" fill="#7acc00"/>
<rect x="1007.7" y="712.4" width="78.7" height="222.7" fill="#2a7b8e"/>
<rect x="1030.8" y="712.4" width="55.6" height="25.9" fill="#7acc00"/>
<rect x="1106.4" y="737.2" width="78.6" height="197.9" fill="#2a7b8e"/>
<rect x="1129.5" y="737.2" width="55.5" height="2.6" fill="#7acc00"/>
<polygon points="410.2,783 427.7,791 410.2,799" fill="#5cb0c6" stroke="#ffffff" stroke-width="1.6" stroke-linejoin="miter"/>
<polygon points="509.0,777.8 526.5,785.8 509.0,793.8" fill="#5cb0c6" stroke="#ffffff" stroke-width="1.6" stroke-linejoin="miter"/>
<polygon points="608.0,736.7 625.5,744.7 608.0,752.7" fill="#5cb0c6" stroke="#ffffff" stroke-width="1.6" stroke-linejoin="miter"/>
<polygon points="706.7,713.4 724.2,721.4 706.7,729.4" fill="#5cb0c6" stroke="#ffffff" stroke-width="1.6" stroke-linejoin="miter"/>
<polygon points="804.8,725.6 822.3,733.6 804.8,741.6" fill="#5cb0c6" stroke="#ffffff" stroke-width="1.6" stroke-linejoin="miter"/>
<polygon points="903.4,725.6 920.9,733.6 903.4,741.6" fill="#5cb0c6" stroke="#ffffff" stroke-width="1.6" stroke-linejoin="miter"/>
<polygon points="1002.7,713.7 1020.2,721.7 1002.7,729.7" fill="#5cb0c6" stroke="#ffffff" stroke-width="1.6" stroke-linejoin="miter"/>
<polygon points="1101.3,736.8 1118.8,744.8 1101.3,752.8" fill="#5cb0c6" stroke="#ffffff" stroke-width="1.6" stroke-linejoin="miter"/>
<rect x="1228.9" y="761.6" width="54.7" height="173.5" fill="#ff0000"/>
<polygon points="1200.2,778.9000000000001 1213.2,785.7 1200.2,792.5" fill="#5cb0c6"/>
<text x="1252.8" y="755.1" font-size="12.5" fill="#252525" text-anchor="middle" textLength="40.7" lengthAdjust="spacingAndGlyphs">-705,4K</text>
<rect x="1327.4" y="759.5" width="55.0" height="175.6" fill="#ff0000"/>
<polygon points="1299.3,784.1 1312.3,790.9 1299.3,797.6999999999999" fill="#5cb0c6"/>
<text x="1351.4" y="753.0" font-size="12.5" fill="#252525" text-anchor="middle" textLength="40.7" lengthAdjust="spacingAndGlyphs">-713,6K</text>
<rect x="1426.2" y="742.5" width="55.0" height="192.6" fill="#ff0000"/>
<polygon points="1398.0,738.2 1411.0,745.0 1398.0,751.8" fill="#5cb0c6"/>
<text x="1450.2" y="736.0" font-size="12.5" fill="#252525" text-anchor="middle" textLength="40.7" lengthAdjust="spacingAndGlyphs">-781,7K</text>
<rect x="1525.0" y="759.5" width="54.7" height="175.6" fill="#ff0000"/>
<polygon points="1496.6,778.9000000000001 1509.6,785.7 1496.6,792.5" fill="#5cb0c6"/>
<text x="1548.8" y="753.0" font-size="12.5" fill="#252525" text-anchor="middle" textLength="40.7" lengthAdjust="spacingAndGlyphs">-713,0K</text>
<rect x="399.9" y="934.2" width="1195.5" height="2.0" fill="#333333"/>
<rect x="1595.4" y="934.4" width="21.1" height="1.6" fill="#c8c8c8"/>
<rect x="1579.7" y="759.0" width="30.8" height="1.0" fill="#b0b0b0"/>
<rect x="1609.4" y="759.5" width="2.2" height="171.5" fill="#ff0000"/>
<polygon points="1604.3,926.8 1610.5,930.6 1616.7,926.8 1610.5,936.4" fill="#ff0000"/>
<text x="1618" y="851.5" font-size="12.5" fill="#333333" font-style="italic" textLength="44.5" lengthAdjust="spacingAndGlyphs">-100,0%</text>
<polyline points="455,763.5 553.4,739.4 652.2,763.2 750.5,746 849.9,746.8 948.5,753.3 1047.2,746.8 1145.8,766.5" fill="none" stroke="#1f78c8" stroke-width="1.5"/>
<circle cx="455" cy="763.5" r="6.8" fill="#0a6cc8"/>
<circle cx="553.4" cy="739.4" r="6.8" fill="#0a6cc8"/>
<circle cx="652.2" cy="763.2" r="6.8" fill="#0a6cc8"/>
<circle cx="750.5" cy="746" r="6.8" fill="#0a6cc8"/>
<circle cx="849.9" cy="746.8" r="6.8" fill="#0a6cc8"/>
<circle cx="948.5" cy="753.3" r="6.8" fill="#0a6cc8"/>
<circle cx="1047.2" cy="746.8" r="6.8" fill="#0a6cc8"/>
<circle cx="1145.8" cy="766.5" r="6.8" fill="#0a6cc8"/>
<text x="455" y="750.9" font-size="12.5" fill="#4a8cf0" text-anchor="middle" textLength="39.4" lengthAdjust="spacingAndGlyphs">102,8%</text>
<text x="553.4" y="727.0" font-size="12.5" fill="#4a8cf0" text-anchor="middle" textLength="39.4" lengthAdjust="spacingAndGlyphs">117,3%</text>
<text x="652.2" y="784.0" font-size="12.5" fill="#4a8cf0" text-anchor="middle" textLength="39.4" lengthAdjust="spacingAndGlyphs">102,5%</text>
<text x="750.5" y="733.8" font-size="12.5" fill="#4a8cf0" text-anchor="middle" textLength="39.4" lengthAdjust="spacingAndGlyphs">113,3%</text>
<text x="849.9" y="734.2" font-size="12.5" fill="#4a8cf0" text-anchor="middle" textLength="39.4" lengthAdjust="spacingAndGlyphs">113,0%</text>
<text x="948.5" y="773.9" font-size="12.5" fill="#4a8cf0" text-anchor="middle" textLength="39.4" lengthAdjust="spacingAndGlyphs">108,9%</text>
<text x="1047.2" y="734.2" font-size="12.5" fill="#4a8cf0" text-anchor="middle" textLength="39.4" lengthAdjust="spacingAndGlyphs">113,0%</text>
<text x="1145.8" y="753.3" font-size="12.5" fill="#4a8cf0" text-anchor="middle" textLength="39.4" lengthAdjust="spacingAndGlyphs">101,1%</text>
<text x="463.2" y="779.2" font-size="12.5" fill="#252525" text-anchor="middle" textLength="37.2" lengthAdjust="spacingAndGlyphs">+16,9K</text>
<text x="561.7" y="773.1" font-size="12.5" fill="#252525" text-anchor="middle" textLength="37.2" lengthAdjust="spacingAndGlyphs">+93,4K</text>
<text x="660.6" y="730.8" font-size="12.5" fill="#252525" text-anchor="middle" textLength="37.2" lengthAdjust="spacingAndGlyphs">+19,5K</text>
<text x="759.4" y="705.9" font-size="12.5" fill="#252525" text-anchor="middle" textLength="43.6" lengthAdjust="spacingAndGlyphs">+106,0K</text>
<text x="858" y="719.5" font-size="12.5" fill="#252525" text-anchor="middle" textLength="37.2" lengthAdjust="spacingAndGlyphs">+97,6K</text>
<text x="957" y="719.5" font-size="12.5" fill="#252525" text-anchor="middle" textLength="37.2" lengthAdjust="spacingAndGlyphs">+69,3K</text>
<text x="1055.6" y="706.3" font-size="12.5" fill="#252525" text-anchor="middle" textLength="43.6" lengthAdjust="spacingAndGlyphs">+103,8K</text>
<text x="1154.3" y="730.8" font-size="12.5" fill="#252525" text-anchor="middle" textLength="30.7" lengthAdjust="spacingAndGlyphs">+8,5K</text>
<text x="454.4" y="864.9" font-size="12.5" fill="#ffffff" text-anchor="middle" textLength="36.4" lengthAdjust="spacingAndGlyphs" stroke="#ffffff" stroke-width="0.45">611,0K</text>
<text x="553.4" y="862.9" font-size="12.5" fill="#ffffff" text-anchor="middle" textLength="36.4" lengthAdjust="spacingAndGlyphs" stroke="#ffffff" stroke-width="0.45">632,3K</text>
<text x="651.7" y="842.1" font-size="12.5" fill="#ffffff" text-anchor="middle" textLength="36.4" lengthAdjust="spacingAndGlyphs" stroke="#ffffff" stroke-width="0.45">803,5K</text>
<text x="750.5" y="829.2" font-size="12.5" fill="#ffffff" text-anchor="middle" textLength="36.4" lengthAdjust="spacingAndGlyphs" stroke="#ffffff" stroke-width="0.45">902,9K</text>
<text x="849.6" y="835.9" font-size="12.5" fill="#ffffff" text-anchor="middle" textLength="36.4" lengthAdjust="spacingAndGlyphs" stroke="#ffffff" stroke-width="0.45">851,2K</text>
<text x="948.2" y="835.9" font-size="12.5" fill="#ffffff" text-anchor="middle" textLength="36.4" lengthAdjust="spacingAndGlyphs" stroke="#ffffff" stroke-width="0.45">850,5K</text>
<text x="1047.1" y="828.9" font-size="12.5" fill="#ffffff" text-anchor="middle" textLength="36.4" lengthAdjust="spacingAndGlyphs" stroke="#ffffff" stroke-width="0.45">902,2K</text>
<text x="1145.7" y="841.6" font-size="12.5" fill="#ffffff" text-anchor="middle" textLength="36.4" lengthAdjust="spacingAndGlyphs" stroke="#ffffff" stroke-width="0.45">802,9K</text>
<text x="454.6" y="951" font-size="12.5" fill="#252525" text-anchor="middle" textLength="41.4" lengthAdjust="spacingAndGlyphs">January</text>
<text x="553.3" y="951" font-size="12.5" fill="#252525" text-anchor="middle" textLength="46.5" lengthAdjust="spacingAndGlyphs">February</text>
<text x="652.0" y="951" font-size="12.5" fill="#252525" text-anchor="middle" textLength="32.3" lengthAdjust="spacingAndGlyphs">March</text>
<text x="750.8" y="951" font-size="12.5" fill="#252525" text-anchor="middle" textLength="23.3" lengthAdjust="spacingAndGlyphs">April</text>
<text x="849.5" y="951" font-size="12.5" fill="#252525" text-anchor="middle" textLength="22.0" lengthAdjust="spacingAndGlyphs">May</text>
<text x="948.2" y="951" font-size="12.5" fill="#252525" text-anchor="middle" textLength="25.2" lengthAdjust="spacingAndGlyphs">June</text>
<text x="1046.9" y="951" font-size="12.5" fill="#252525" text-anchor="middle" textLength="20.7" lengthAdjust="spacingAndGlyphs">July</text>
<text x="1145.6" y="951" font-size="12.5" fill="#252525" text-anchor="middle" textLength="36.2" lengthAdjust="spacingAndGlyphs">August</text>
<text x="1244.4" y="951" font-size="12.5" fill="#252525" text-anchor="middle" textLength="56.9" lengthAdjust="spacingAndGlyphs">September</text>
<text x="1343.1" y="951" font-size="12.5" fill="#252525" text-anchor="middle" textLength="41.4" lengthAdjust="spacingAndGlyphs">October</text>
<text x="1441.8" y="951" font-size="12.5" fill="#252525" text-anchor="middle" textLength="53.6" lengthAdjust="spacingAndGlyphs">November</text>
<text x="1540.5" y="951" font-size="12.5" fill="#252525" text-anchor="middle" textLength="53.6" lengthAdjust="spacingAndGlyphs">December</text>
<text x="387.5" y="784.8" font-size="12.5" fill="#252525" text-anchor="end" textLength="20.6" lengthAdjust="spacingAndGlyphs">ΔPL</text>
<text x="387.5" y="796.7" font-size="12.5" fill="#8a8a8a" text-anchor="end" textLength="13.9" lengthAdjust="spacingAndGlyphs">PY</text>
<text x="388" y="865" font-size="12.5" fill="#252525" text-anchor="end" textLength="15.8" lengthAdjust="spacingAndGlyphs">AC</text>
</svg>
</body></html>
